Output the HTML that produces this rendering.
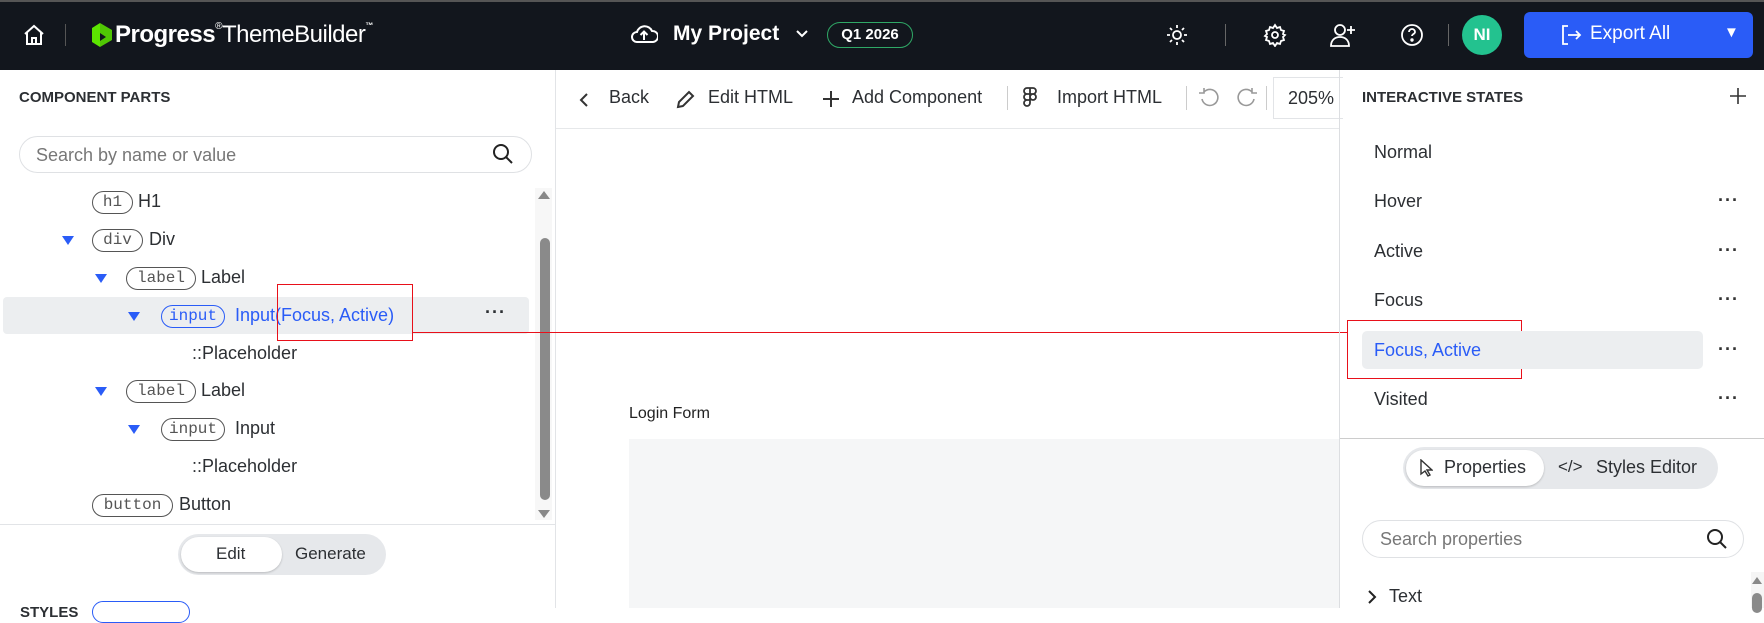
<!DOCTYPE html>
<html><head><meta charset="utf-8"><style>
*{box-sizing:border-box;margin:0;padding:0}
body{width:1764px;height:608px;overflow:hidden;background:#fff;font-family:"Liberation Sans",sans-serif;color:#2c2f33;position:relative}
.a{position:absolute}
.hdr{left:0;top:0;width:1764px;height:70px;background:#12161d;border-top:2px solid #555}
.w{color:#fff}
.tag{position:absolute;border:1.5px solid #555;border-radius:12px;font-family:"Liberation Mono",monospace;font-size:16px;color:#555;height:23px;line-height:20px;text-align:center}
.tl{position:absolute;font-size:18px;color:#2c2f33}
.tri{position:absolute;width:0;height:0;border-left:6px solid transparent;border-right:6px solid transparent;border-top:9px solid #2a5cf7}
.st{position:absolute;left:1374px;font-size:18px;color:#2c2f33}
.dots{position:absolute;left:1718px;font-size:18px;letter-spacing:1px;color:#333;font-weight:bold}
.tb{position:absolute;top:87px;font-size:18px;color:#2c2f33}
.sep{position:absolute;width:1px;background:#ccc}
</style></head><body>
<div class="a hdr"></div>
<svg class="a" style="left:22px;top:23px" width="24" height="24" viewBox="0 0 24 24" fill="none" stroke="#fff" stroke-width="2"><path d="M3 11L12 3l9 8M5 9v12h14V9M10 21v-6h4v6"/></svg>
<div class="a" style="left:65px;top:24px;width:1px;height:22px;background:#555"></div>
<svg class="a" style="left:90px;top:20px" width="24" height="30" viewBox="0 0 24 30"><path d="M2 8l8-5v24l-8-5z" fill="#5ce500"/><path d="M10 3l12 7v10l-12 7v-6l6-4-6-4z" fill="#5ce500" opacity=".85"/></svg>
<div class="a w" style="left:115px;top:21px;font-size:24px;font-weight:bold;letter-spacing:-0.5px">Progress<span style="font-weight:normal;font-size:10px;vertical-align:top">®</span><span style="font-weight:normal">ThemeBuilder</span><span style="font-size:8px;vertical-align:top">™</span></div>
<svg class="a" style="left:630px;top:22px" width="28" height="24" viewBox="0 0 28 24" fill="none" stroke="#fff" stroke-width="2"><path d="M7 20a5 5 0 010-10 8 8 0 0115-1 5.5 5.5 0 011 11z"/><path d="M14 18v-8M10.5 13l3.5-3.5 3.5 3.5"/></svg>
<div class="a w" style="left:673px;top:22px;font-size:21px;font-weight:bold">My Project</div>
<svg class="a" style="left:795px;top:29px" width="14" height="10"><path d="M2 2l5 5 5-5" stroke="#fff" stroke-width="2" fill="none"/></svg>
<div class="a" style="left:827px;top:22px;width:86px;height:26px;border:1.5px solid #2fa866;border-radius:13px;color:#fff;font-size:15px;font-weight:bold;text-align:center;line-height:23px">Q1 2026</div>
<svg class="a" style="left:1165px;top:23px" width="24" height="24" viewBox="0 0 24 24" fill="none" stroke="#fff" stroke-width="1.8"><circle cx="12" cy="12" r="4"/><path d="M12 2v3M12 19v3M2 12h3M19 12h3M5 5l2 2M17 17l2 2M5 19l2-2M17 7l2-2"/></svg>
<div class="a" style="left:1225px;top:24px;width:1px;height:22px;background:#666"></div>
<svg class="a" style="left:1263px;top:23px" width="24" height="24" viewBox="0 0 24 24" fill="none" stroke="#fff" stroke-width="1.8"><circle cx="12" cy="12" r="3"/><path d="M12 2l2 3 3-1 1 3 3 1-1 3 2 1-2 2 1 3-3 1-1 3-3-1-2 3-2-3-3 1-1-3-3-1 1-3-2-1 2-2-1-3 3-1 1-3 3 1z"/></svg>
<svg class="a" style="left:1329px;top:22px" width="28" height="26" viewBox="0 0 28 26" fill="none" stroke="#fff" stroke-width="1.8"><circle cx="11" cy="8" r="5"/><path d="M2 24c0-6 4-9 9-9s9 3 9 9zM22 4v8M18 8h8"/></svg>
<svg class="a" style="left:1400px;top:23px" width="24" height="24" viewBox="0 0 24 24" fill="none" stroke="#fff" stroke-width="1.8"><circle cx="12" cy="12" r="10"/><path d="M9 9a3 3 0 116 0c0 2-3 2-3 4"/><circle cx="12" cy="17" r=".8" fill="#fff"/></svg>
<div class="a" style="left:1448px;top:24px;width:1px;height:22px;background:#666"></div>
<div class="a" style="left:1462px;top:15px;width:40px;height:40px;border-radius:50%;background:#23c28f;color:#fff;font-size:17px;font-weight:bold;text-align:center;line-height:40px">NI</div>
<div class="a" style="left:1524px;top:12px;width:229px;height:46px;background:#2a5cf7;border-radius:6px"></div>
<svg class="a" style="left:1560px;top:24px" width="22" height="22" viewBox="0 0 22 22" fill="none" stroke="#fff" stroke-width="1.8"><path d="M8 2H3v18h5M8 11h12M16 7l4 4-4 4"/></svg>
<div class="a w" style="left:1590px;top:23px;font-size:19px">Export All</div>
<div class="a w" style="left:1724px;top:24px;font-size:15px">▼</div>

<!-- left panel -->
<div class="a" style="left:555px;top:70px;width:1px;height:538px;background:#e2e4e7"></div>
<div class="a" style="left:19px;top:89px;font-size:15px;font-weight:bold;color:#2c2f33">COMPONENT PARTS</div>
<div class="a" style="left:19px;top:136px;width:513px;height:37px;border:1px solid #dfe1e4;border-radius:19px"></div>
<div class="a" style="left:36px;top:145px;font-size:18px;color:#777">Search by name or value</div>
<svg class="a" style="left:492px;top:143px" width="22" height="22" viewBox="0 0 22 22" fill="none" stroke="#222" stroke-width="2"><circle cx="9" cy="9" r="7"/><path d="M14 14l6 6"/></svg>

<div class="a" style="left:3px;top:297px;width:526px;height:37px;background:#eceef0;border-radius:4px"></div>
<div class="tag" style="left:92px;top:191px;width:41px">h1</div><div class="tl" style="left:138px;top:191px">H1</div>
<div class="tri" style="left:62px;top:236px"></div><div class="tag" style="left:92px;top:229px;width:51px">div</div><div class="tl" style="left:149px;top:229px">Div</div>
<div class="tri" style="left:95px;top:274px"></div><div class="tag" style="left:126px;top:267px;width:70px">label</div><div class="tl" style="left:201px;top:267px">Label</div>
<div class="tri" style="left:128px;top:312px"></div><div class="tag" style="left:161px;top:305px;width:64px;border-color:#2a5cf7;color:#2a5cf7">input</div><div class="tl" style="left:235px;top:305px;color:#2a5cf7">Input(Focus, Active)</div>
<div class="a" style="left:485px;top:302px;font-size:18px;font-weight:bold;letter-spacing:1px">···</div>
<div class="tl" style="left:192px;top:343px">::Placeholder</div>
<div class="tri" style="left:95px;top:387px"></div><div class="tag" style="left:126px;top:380px;width:70px">label</div><div class="tl" style="left:201px;top:380px">Label</div>
<div class="tri" style="left:128px;top:425px"></div><div class="tag" style="left:161px;top:418px;width:64px">input</div><div class="tl" style="left:235px;top:418px">Input</div>
<div class="tl" style="left:192px;top:456px">::Placeholder</div>
<div class="tag" style="left:92px;top:494px;width:81px">button</div><div class="tl" style="left:179px;top:494px">Button</div>
<div class="a" style="left:535px;top:188px;width:17px;height:332px;background:#f7f7f7"></div>
<div class="a" style="left:538px;top:191px;border-left:6px solid transparent;border-right:6px solid transparent;border-bottom:8px solid #888"></div>
<div class="a" style="left:540px;top:238px;width:10px;height:262px;background:#8a8a8a;border-radius:5px"></div>
<div class="a" style="left:538px;top:510px;border-left:6px solid transparent;border-right:6px solid transparent;border-top:8px solid #888"></div>
<div class="a" style="left:0;top:524px;width:555px;height:1px;background:#e2e4e7"></div>
<div class="a" style="left:178px;top:534px;width:208px;height:41px;background:#e6e8eb;border-radius:21px"></div>
<div class="a" style="left:181px;top:537px;width:101px;height:35px;background:#fff;border-radius:18px;box-shadow:0 1px 2px rgba(0,0,0,.2)"></div>
<div class="a" style="left:216px;top:544px;font-size:17px">Edit</div>
<div class="a" style="left:295px;top:544px;font-size:17px">Generate</div>
<div class="a" style="left:20px;top:604px;font-size:15px;font-weight:bold">STYLES</div>
<div class="a" style="left:92px;top:601px;width:98px;height:22px;border:1.5px solid #2a5cf7;border-radius:11px"></div>

<!-- red -->
<div class="a" style="left:277px;top:284px;width:136px;height:57px;border:1px solid #e8101a"></div>
<div class="a" style="left:413px;top:332px;width:935px;height:1px;background:#e8101a"></div>
<div class="a" style="left:1347px;top:320px;width:175px;height:59px;border:1px solid #e8101a"></div>

<!-- center -->
<div class="a" style="left:556px;top:128px;width:783px;height:1px;background:#e6e8ea"></div>
<svg class="a" style="left:578px;top:92px" width="12" height="16"><path d="M9 2L3 8l6 6" stroke="#333" stroke-width="2" fill="none"/></svg>
<div class="tb" style="left:609px">Back</div>
<svg class="a" style="left:674px;top:89px" width="22" height="22" viewBox="0 0 22 22"><path d="M4 18l1-5L15 3l4 4L9 17z M4 18l5-1" stroke="#333" stroke-width="2" fill="none"/></svg>
<div class="tb" style="left:708px">Edit HTML</div>
<svg class="a" style="left:822px;top:90px" width="18" height="18"><path d="M9 1v16M1 9h16" stroke="#333" stroke-width="2"/></svg>
<div class="tb" style="left:852px">Add Component</div>
<div class="sep" style="left:1007px;top:86px;height:24px"></div>
<svg class="a" style="left:1022px;top:86px" width="16" height="24" viewBox="0 0 16 24" fill="none" stroke="#333" stroke-width="1.8"><path d="M8 2H5a3 3 0 000 6h3zM8 2h3a3 3 0 010 6H8zM8 8H5a3 3 0 000 6h3zM8 8v6M11 14a3 3 0 100-6 3 3 0 000 6zM8 14H5a3 3 0 103 3z"/></svg>
<div class="tb" style="left:1057px">Import HTML</div>
<div class="sep" style="left:1186px;top:86px;height:24px"></div>
<svg class="a" style="left:1198px;top:87px" width="22" height="22" viewBox="0 0 22 22" fill="none" stroke="#999" stroke-width="1.6"><path d="M6 5a8 8 0 11-2 7M6 1v5H1"/></svg>
<svg class="a" style="left:1236px;top:87px" width="22" height="22" viewBox="0 0 22 22" fill="none" stroke="#999" stroke-width="1.6"><path d="M16 5a8 8 0 102 7M16 1v5h5"/></svg>
<div class="sep" style="left:1266px;top:86px;height:24px"></div>
<div class="a" style="left:1273px;top:77px;width:70px;height:42px;border:1px solid #e2e4e7;border-right:none"></div>
<div class="a" style="left:1288px;top:88px;font-size:18px">205%</div>
<div class="a" style="left:629px;top:405px;font-size:16px;color:#222">Login Form</div>
<div class="a" style="left:629px;top:439px;width:710px;height:169px;background:#f5f6f7"></div>

<!-- right -->
<div class="a" style="left:1339px;top:70px;width:1px;height:538px;background:#dcdee1"></div>
<div class="a" style="left:1362px;top:89px;font-size:15px;font-weight:bold">INTERACTIVE STATES</div>
<svg class="a" style="left:1729px;top:87px" width="18" height="18"><path d="M9 1v16M1 9h16" stroke="#333" stroke-width="1.6"/></svg>
<div class="a" style="left:1362px;top:331px;width:341px;height:38px;background:#eceef0;border-radius:5px"></div>
<div class="st" style="top:142px">Normal</div>
<div class="st" style="top:191px">Hover</div><div class="dots" style="top:190px">···</div>
<div class="st" style="top:241px">Active</div><div class="dots" style="top:240px">···</div>
<div class="st" style="top:290px">Focus</div><div class="dots" style="top:289px">···</div>
<div class="st" style="top:340px;color:#2a5cf7">Focus, Active</div><div class="dots" style="top:339px">···</div>
<div class="st" style="top:389px">Visited</div><div class="dots" style="top:388px">···</div>
<div class="a" style="left:1340px;top:438px;width:424px;height:1px;background:#ccc"></div>
<div class="a" style="left:1403px;top:447px;width:315px;height:42px;background:#e6e8eb;border-radius:21px"></div>
<div class="a" style="left:1406px;top:450px;width:138px;height:36px;background:#fff;border-radius:18px;box-shadow:0 1px 2px rgba(0,0,0,.2)"></div>
<svg class="a" style="left:1419px;top:459px" width="14" height="18"><path d="M2 1v14l4-3 3 5 2-1-3-5h5z" stroke="#333" stroke-width="1.4" fill="none"/></svg>
<div class="a" style="left:1444px;top:457px;font-size:18px">Properties</div>
<div class="a" style="left:1558px;top:457px;font-size:17px">&lt;/&gt;</div>
<div class="a" style="left:1596px;top:457px;font-size:18px">Styles Editor</div>
<div class="a" style="left:1362px;top:520px;width:382px;height:38px;border:1px solid #dfe1e4;border-radius:19px"></div>
<div class="a" style="left:1380px;top:529px;font-size:18px;color:#777">Search properties</div>
<svg class="a" style="left:1706px;top:528px" width="22" height="22" viewBox="0 0 22 22" fill="none" stroke="#222" stroke-width="2"><circle cx="9" cy="9" r="7"/><path d="M14 14l6 6"/></svg>
<svg class="a" style="left:1367px;top:589px" width="10" height="16"><path d="M2 2l6 6-6 6" stroke="#222" stroke-width="2" fill="none"/></svg>
<div class="a" style="left:1389px;top:586px;font-size:18px">Text</div>
<div class="a" style="left:1751px;top:572px;width:13px;height:36px;background:#f5f5f5"></div>
<div class="a" style="left:1752px;top:577px;border-left:5px solid transparent;border-right:5px solid transparent;border-bottom:7px solid #888"></div>
<div class="a" style="left:1752px;top:593px;width:10px;height:20px;background:#8a8a8a;border-radius:5px"></div>
</body></html>
